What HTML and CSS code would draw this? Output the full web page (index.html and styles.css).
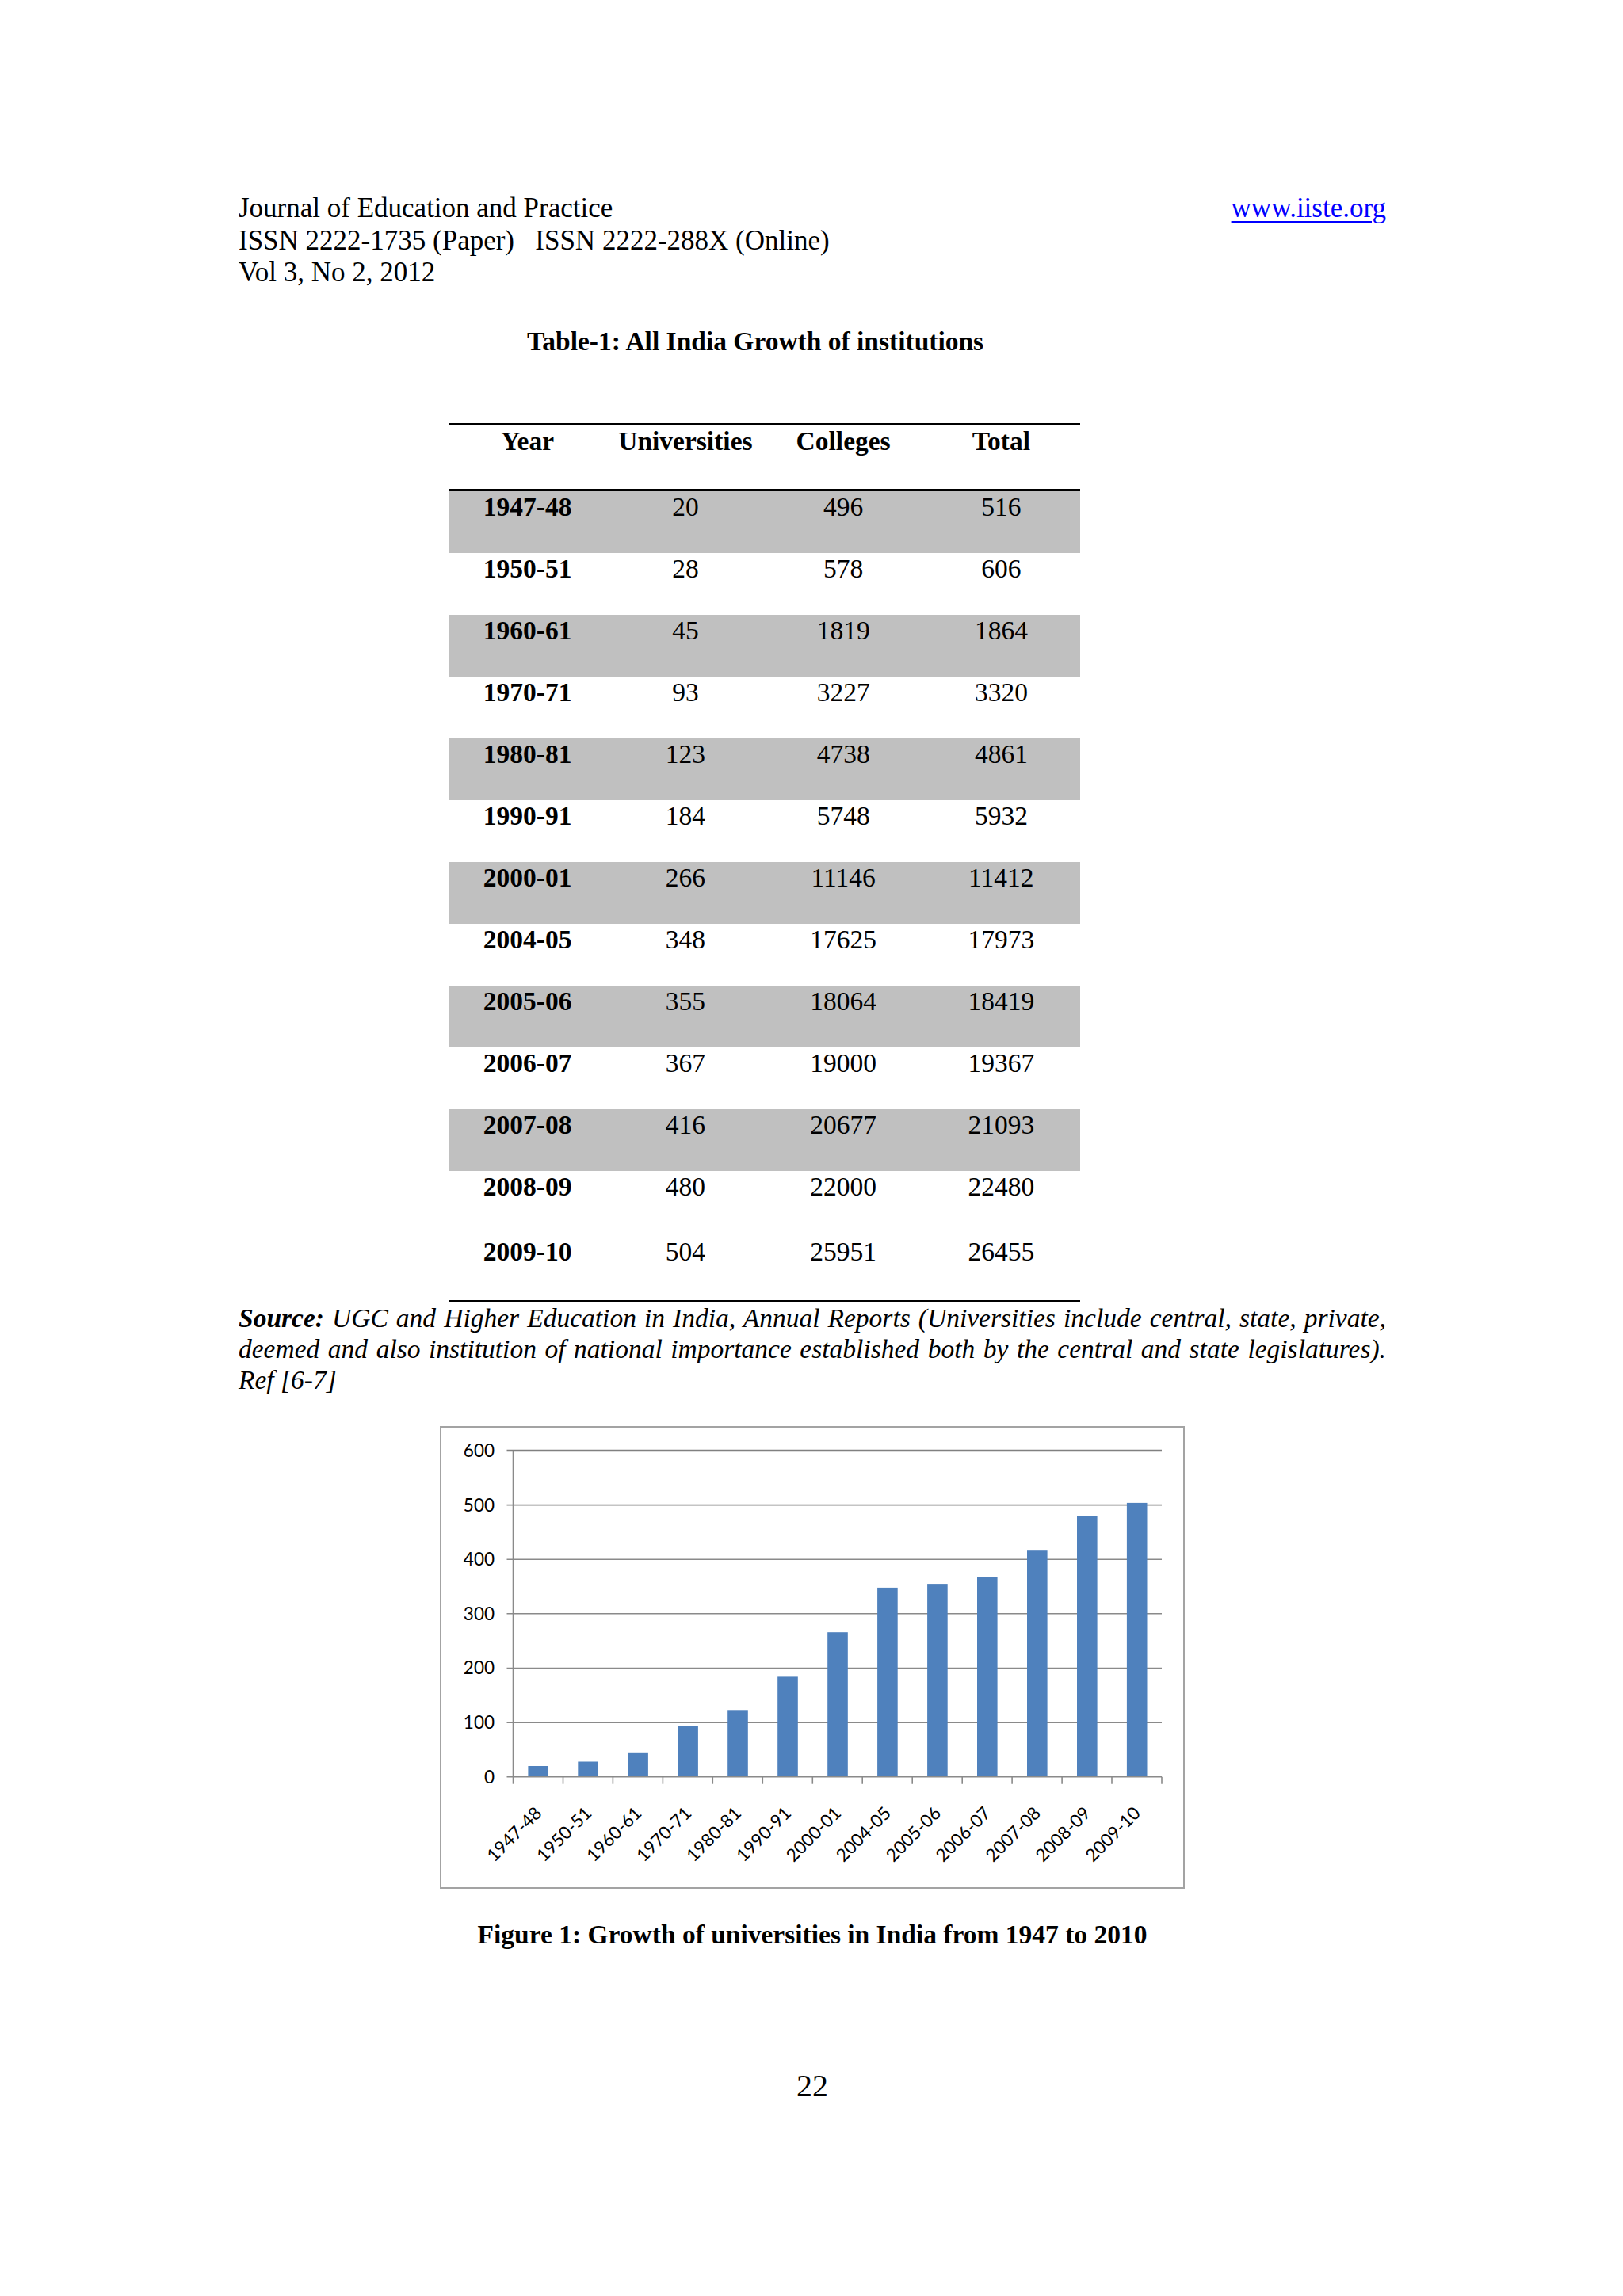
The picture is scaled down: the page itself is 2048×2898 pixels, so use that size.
FILE: index.html
```html
<!DOCTYPE html>
<html lang="en">
<head>
<meta charset="utf-8">
<title>Journal of Education and Practice - Table-1</title>
<link rel="stylesheet" href="styles.css">
</head>
<body>
<div class="page">
  <div class="content">
    <header class="header">
      <div class="hline hline-first">
        <span>Journal of Education and Practice</span>
        <a class="site" href="#">www.iiste.org</a>
      </div>
      <div class="hline">ISSN 2222-1735 (Paper) &nbsp;&nbsp;ISSN 2222-288X (Online)</div>
      <div class="hline">Vol 3, No 2, 2012</div>
    </header>

    <div class="table-title">Table-1: All India Growth of institutions</div>

    <div class="tbl">
      <div class="row head"><span>Year</span><span>Universities</span><span>Colleges</span><span>Total</span></div>
      <div class="row gray"><span class="yr">1947-48</span><span>20</span><span>496</span><span>516</span></div>
      <div class="row"><span class="yr">1950-51</span><span>28</span><span>578</span><span>606</span></div>
      <div class="row gray"><span class="yr">1960-61</span><span>45</span><span>1819</span><span>1864</span></div>
      <div class="row"><span class="yr">1970-71</span><span>93</span><span>3227</span><span>3320</span></div>
      <div class="row gray"><span class="yr">1980-81</span><span>123</span><span>4738</span><span>4861</span></div>
      <div class="row"><span class="yr">1990-91</span><span>184</span><span>5748</span><span>5932</span></div>
      <div class="row gray"><span class="yr">2000-01</span><span>266</span><span>11146</span><span>11412</span></div>
      <div class="row"><span class="yr">2004-05</span><span>348</span><span>17625</span><span>17973</span></div>
      <div class="row gray"><span class="yr">2005-06</span><span>355</span><span>18064</span><span>18419</span></div>
      <div class="row"><span class="yr">2006-07</span><span>367</span><span>19000</span><span>19367</span></div>
      <div class="row gray"><span class="yr">2007-08</span><span>416</span><span>20677</span><span>21093</span></div>
      <div class="row"><span class="yr">2008-09</span><span>480</span><span>22000</span><span>22480</span></div>
      <div class="row last"><span class="yr">2009-10</span><span>504</span><span>25951</span><span>26455</span></div>
    </div>

    <p class="source"><b>Source:</b> UGC and Higher Education in India, Annual Reports (Universities include central, state, private, deemed and also institution of national importance established both by the central and state legislatures). Ref [6-7]</p>

    <div class="chart">
      <svg width="940" height="584" viewBox="0 0 940 584" xmlns="http://www.w3.org/2000/svg">
        <rect x="1" y="1" width="938" height="582" fill="#ffffff" stroke="#a3a3a3" stroke-width="2"/>
        <g stroke="#8a8a8a" stroke-width="1.6">
          <line x1="84.5" y1="31" x2="911" y2="31" stroke-width="2.4" stroke="#808080"/>
          <line x1="84.5" y1="99.6" x2="911" y2="99.6"/>
          <line x1="84.5" y1="168.2" x2="911" y2="168.2"/>
          <line x1="84.5" y1="236.8" x2="911" y2="236.8"/>
          <line x1="84.5" y1="305.5" x2="911" y2="305.5"/>
          <line x1="84.5" y1="374.1" x2="911" y2="374.1"/>
          <line x1="92.5" y1="31" x2="92.5" y2="442.7"/>
        </g>
        <g class="ylab" text-anchor="end">
          <text x="69" y="38.9">600</text>
          <text x="69" y="107.5">500</text>
          <text x="69" y="176.1">400</text>
          <text x="69" y="244.7">300</text>
          <text x="69" y="313.4">200</text>
          <text x="69" y="382">100</text>
          <text x="69" y="450.6">0</text>
        </g>
        <g fill="#4f81bd">
          <rect x="111.4" y="429.0" width="25.6" height="13.7"/>
          <rect x="174.3" y="423.5" width="25.6" height="19.2"/>
          <rect x="237.3" y="411.8" width="25.6" height="30.9"/>
          <rect x="300.3" y="378.9" width="25.6" height="63.8"/>
          <rect x="363.2" y="358.3" width="25.6" height="84.4"/>
          <rect x="426.2" y="316.4" width="25.6" height="126.3"/>
          <rect x="489.2" y="260.2" width="25.6" height="182.5"/>
          <rect x="552.1" y="203.9" width="25.6" height="238.8"/>
          <rect x="615.1" y="199.1" width="25.6" height="243.6"/>
          <rect x="678.0" y="190.9" width="25.6" height="251.8"/>
          <rect x="741.0" y="157.2" width="25.6" height="285.5"/>
          <rect x="804.0" y="113.3" width="25.6" height="329.4"/>
          <rect x="866.9" y="96.9" width="25.6" height="345.8"/>
        </g>
        <g stroke="#8a8a8a" stroke-width="1.6">
          <line x1="84.5" y1="442.7" x2="911" y2="442.7"/>
          <line x1="92.5" y1="442.7" x2="92.5" y2="451.7"/>
          <line x1="155.5" y1="442.7" x2="155.5" y2="451.7"/>
          <line x1="218.4" y1="442.7" x2="218.4" y2="451.7"/>
          <line x1="281.4" y1="442.7" x2="281.4" y2="451.7"/>
          <line x1="344.3" y1="442.7" x2="344.3" y2="451.7"/>
          <line x1="407.3" y1="442.7" x2="407.3" y2="451.7"/>
          <line x1="470.3" y1="442.7" x2="470.3" y2="451.7"/>
          <line x1="533.2" y1="442.7" x2="533.2" y2="451.7"/>
          <line x1="596.2" y1="442.7" x2="596.2" y2="451.7"/>
          <line x1="659.2" y1="442.7" x2="659.2" y2="451.7"/>
          <line x1="722.1" y1="442.7" x2="722.1" y2="451.7"/>
          <line x1="785.1" y1="442.7" x2="785.1" y2="451.7"/>
          <line x1="848.0" y1="442.7" x2="848.0" y2="451.7"/>
          <line x1="911.0" y1="442.7" x2="911.0" y2="451.7"/>
        </g>
        <g class="xlab" text-anchor="end">
          <text transform="translate(130,490) rotate(-45)">1947-48</text>
          <text transform="translate(192.9,490) rotate(-45)">1950-51</text>
          <text transform="translate(255.9,490) rotate(-45)">1960-61</text>
          <text transform="translate(318.9,490) rotate(-45)">1970-71</text>
          <text transform="translate(381.8,490) rotate(-45)">1980-81</text>
          <text transform="translate(444.8,490) rotate(-45)">1990-91</text>
          <text transform="translate(507.8,490) rotate(-45)">2000-01</text>
          <text transform="translate(570.7,490) rotate(-45)">2004-05</text>
          <text transform="translate(633.7,490) rotate(-45)">2005-06</text>
          <text transform="translate(696.6,490) rotate(-45)">2006-07</text>
          <text transform="translate(759.6,490) rotate(-45)">2007-08</text>
          <text transform="translate(822.6,490) rotate(-45)">2008-09</text>
          <text transform="translate(885.5,490) rotate(-45)">2009-10</text>
        </g>
      </svg>
    </div>

    <div class="caption">Figure 1: Growth of universities in India from 1947 to 2010</div>

    <div class="pageno">22</div>
  </div>
</div>
</body>
</html>
```

FILE: styles.css
```css
html, body {
  margin: 0;
  padding: 0;
  background: #ffffff;
}

.page {
  width: 2048px;
  height: 2898px;
  box-sizing: border-box;
  padding: 243px 0 0 301px;
  color: #000000;
  font-family: "Liberation Serif", "Times New Roman", serif;
}

.content {
  width: 1448px;
}

.header {
  font-size: 35px;
  line-height: 40.5px;
}

.hline-first {
  display: flex;
  justify-content: space-between;
}

.site {
  color: #0000ff;
  text-decoration: underline;
  text-underline-offset: 5px;
  text-decoration-thickness: 2px;
}

.table-title {
  margin-top: 47px;
  padding-left: 364px;
  font-size: 33.5px;
  line-height: 38px;
  font-weight: bold;
}

.tbl {
  margin-top: 84px;
  margin-left: 265px;
  width: 797px;
  border-top: 3px solid #000000;
  border-bottom: 3px solid #000000;
  font-size: 33.5px;
  line-height: 38px;
}

.row {
  display: grid;
  grid-template-columns: repeat(4, 1fr);
  box-sizing: border-box;
  height: 78px;
  padding-top: 1px;
  text-align: center;
}

.row.head {
  height: 83px;
  border-bottom: 3px solid #000000;
  font-weight: bold;
}

.row.gray {
  background: #c0c0c0;
}

.row.last {
  height: 85px;
  padding-top: 5px;
}

.yr {
  font-weight: bold;
}

.source {
  margin: 0;
  font-size: 33.5px;
  line-height: 39px;
  font-style: italic;
  text-align: justify;
}

.chart {
  margin-top: 39px;
  margin-left: 254px;
  width: 940px;
  height: 584px;
}

.chart svg {
  display: block;
}

.ylab text,
.xlab text {
  font-family: Lato, "Open Sans", sans-serif;
  font-size: 22.5px;
  fill: #000000;
}

.caption {
  margin-top: 39.7px;
  font-size: 33.5px;
  line-height: 38px;
  font-weight: bold;
  text-align: center;
}

.pageno {
  margin-top: 148.8px;
  font-size: 40px;
  line-height: 46px;
  text-align: center;
}
```
